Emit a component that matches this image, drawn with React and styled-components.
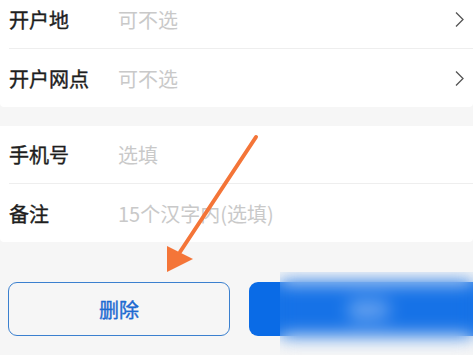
import React from 'react';
import styled, { createGlobalStyle } from 'styled-components';

const GlobalStyle = createGlobalStyle`
    html, body {
        margin: 0;
        padding: 0;
        background: #f6f6f6;
        font-family: "Noto Sans CJK SC", "Noto Sans", sans-serif;
    }
`;

const Chevron = () => (
    <svg width="9" height="17" viewBox="0 0 9 17">
        <path d="M1 1.5 L8 8.5 L1 15.5" fill="none" stroke="#555" strokeWidth="1.3" />
    </svg>
);

const rowsTop = [
    { label: '开户地', placeholder: '可不选', arrow: true },
    { label: '开户网点', placeholder: '可不选', arrow: true },
];

const rowsBottom = [
    { label: '手机号', placeholder: '选填' },
    { label: '备注', placeholder: '15个汉字内(选填)' },
];

const App = () => {
    return (
        <Page>
            <GlobalStyle />
            <Card $first>
                {rowsTop.map((r, i) => (
                    <Row key={r.label} $last={i === rowsTop.length - 1}>
                        <Label>{r.label}</Label>
                        <Placeholder>{r.placeholder}</Placeholder>
                        {r.arrow && <Chevron />}
                    </Row>
                ))}
            </Card>
            <Card>
                {rowsBottom.map((r, i) => (
                    <Row key={r.label} $last={i === rowsBottom.length - 1}>
                        <Label>{r.label}</Label>
                        <Placeholder>{r.placeholder}</Placeholder>
                    </Row>
                ))}
            </Card>
            <Actions>
                <OutlineButton>删除</OutlineButton>
                <PrimaryButton>保存</PrimaryButton>
            </Actions>
            <Blur />
            <Arrow width="473" height="355" viewBox="0 0 473 355">
                <line x1="256" y1="137" x2="180" y2="252" stroke="#f47538" strokeWidth="4" strokeLinecap="round" />
                <polygon points="167,272 167,246 193,259" fill="#f47538" />
            </Arrow>
        </Page>
    );
};

const Page = styled.div`
    position: relative;
    width: 473px;
    height: 355px;
    overflow: hidden;
    background: #f6f6f6;
`;

const Card = styled.div`
    background: #fff;
    margin-top: ${p => (p.$first ? '-9px' : '19px')};
    padding-left: 9px;
    border-radius: 0 0 4px 4px;
`;

const Row = styled.div`
    height: 58px;
    display: flex;
    align-items: center;
    padding-right: 9px;
    border-bottom: ${p => (p.$last ? 'none' : '1px solid #eeeeee')};
    box-sizing: border-box;
`;

const Label = styled.div`
    width: 109px;
    font-size: 20px;
    color: #1e1e1e;
    -webkit-text-stroke: 0.4px #1e1e1e;
`;

const Placeholder = styled.div`
    flex: 1;
    font-size: 20px;
    color: #c9c9c9;
`;

const Actions = styled.div`
    display: flex;
    gap: 19px;
    padding: 40px 0 0 8px;
`;

const OutlineButton = styled.div`
    width: 222px;
    height: 54px;
    flex-shrink: 0;
    box-sizing: border-box;
    border: 1.5px solid #3b80cf;
    border-radius: 9px;
    display: flex;
    align-items: center;
    justify-content: center;
    color: #1d6ad1;
    font-size: 20px;
    -webkit-text-stroke: 0.4px #1d6ad1;
    background: #f6f6f6;
`;

const PrimaryButton = styled.div`
    width: 240px;
    height: 54px;
    flex-shrink: 0;
    border-radius: 9px;
    background: #0a6be6;
    color: #fff;
    font-size: 20px;
    display: flex;
    align-items: center;
    justify-content: center;
`;

const Blur = styled.div`
    position: absolute;
    left: 280px;
    top: 272px;
    width: 193px;
    height: 83px;
    backdrop-filter: blur(9px);
    -webkit-backdrop-filter: blur(9px);
    background: rgba(255, 255, 255, 0.05);
`;

const Arrow = styled.svg`
    position: absolute;
    left: 0;
    top: 0;
    pointer-events: none;
`;

export default App;
